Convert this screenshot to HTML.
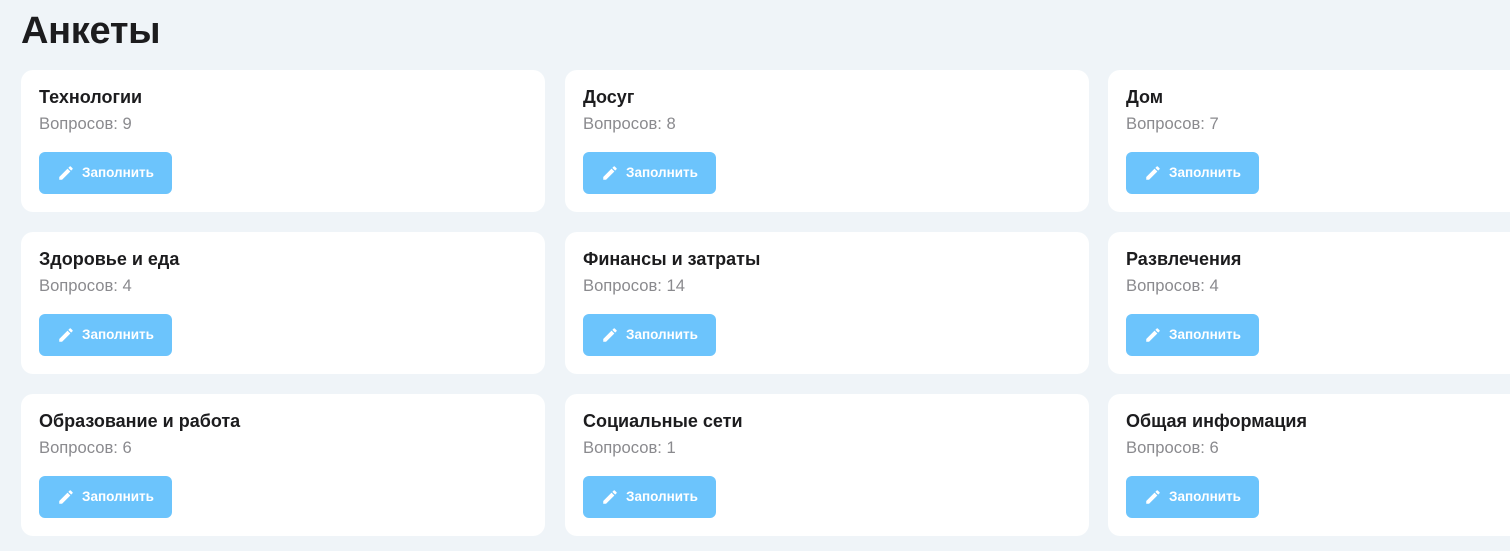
<!DOCTYPE html>
<html><head><meta charset="utf-8"><style>
html,body{margin:0;padding:0;width:1510px;height:551px;overflow:hidden;background:#eff4f8;font-family:"Liberation Sans",sans-serif;}
h1{position:absolute;left:21px;top:9px;margin:0;font-size:38px;font-weight:700;color:#1c1c1e;letter-spacing:-0.3px;line-height:44px;}
.card{position:absolute;width:524px;height:142px;background:#fff;border-radius:12px;}
.t{position:absolute;left:18px;top:16px;font-size:18px;font-weight:700;color:#1c1c1e;line-height:22px;}
.q{position:absolute;left:18px;top:44px;font-size:16.6px;color:#8a8a8e;line-height:20px;}
.b{position:absolute;left:18px;top:82px;width:133px;height:42px;background:#6cc4fc;border-radius:6px;color:#fff;font-size:13.5px;font-weight:700;}
.b svg{position:absolute;left:18px;top:12px;}
.b span{position:absolute;left:43px;top:12px;line-height:18px;}
</style></head><body>
<h1>Анкеты</h1>
<div id="w"></div>
<script>
var d=[["Технологии",9],["Досуг",8],["Дом",7],["Здоровье и еда",4],["Финансы и затраты",14],["Развлечения",4],["Образование и работа",6],["Социальные сети",1],["Общая информация",6]];
var xs=[21,565,1108],ys=[70,232,394],h="";
d.forEach(function(e,i){h+='<div class="card" style="left:'+xs[i%3]+'px;top:'+ys[Math.floor(i/3)]+'px"><div class="t">'+e[0]+'</div><div class="q">Вопросов: '+e[1]+'</div><div class="b"><svg width="18" height="18" viewBox="0 0 24 24"><path fill="#fff" d="M3 17.25V21h3.75L17.81 9.94l-3.75-3.75L3 17.25zM20.71 7.04a1 1 0 0 0 0-1.41l-2.34-2.34a1 1 0 0 0-1.41 0l-1.83 1.830 3.75 3.75 1.83-1.83z"/></svg><span>Заполнить</span></div></div>';});
document.getElementById("w").innerHTML=h;
</script>
</body></html>
